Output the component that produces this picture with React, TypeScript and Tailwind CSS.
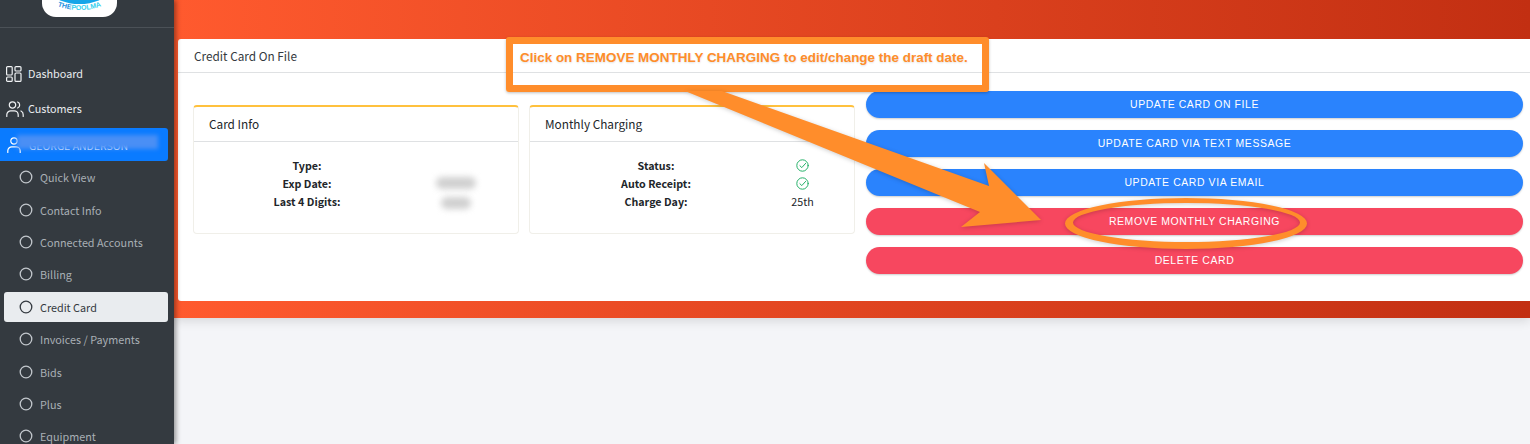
import type { ReactNode } from "react";

const font = { fontFamily: '"Noto Sans CJK JP", "Noto Sans", sans-serif' };
const arial = { fontFamily: '"Liberation Sans", Arial, sans-serif' };

function CircleIcon({ dark }: { dark?: boolean }) {
  return (
    <svg width="14" height="14" viewBox="0 0 14 14" fill="none" stroke={dark ? "#343a40" : "#c2c7cc"} strokeWidth="1.3">
      <circle cx="7" cy="7" r="5.8" />
    </svg>
  );
}

function DashboardIcon() {
  return (
    <svg width="16" height="16" viewBox="0 0 16 16" fill="none" stroke="#f1f3f5" strokeWidth="1.2">
      <rect x="0.6" y="0.6" width="5.6" height="8.4" rx="1" />
      <rect x="9" y="0.6" width="6" height="4.4" rx="1" />
      <rect x="0.6" y="11" width="5.6" height="4.4" rx="1" />
      <rect x="9" y="7" width="6" height="8.4" rx="1" />
    </svg>
  );
}

function UsersIcon() {
  return (
    <svg width="18" height="16" viewBox="0 0 18 16" fill="none" stroke="#f1f3f5" strokeWidth="1.2" strokeLinecap="round">
      <circle cx="6.5" cy="4" r="3.2" />
      <path d="M0.8 15.4v-1.6a4 4 0 0 1 4-4h3.4a4 4 0 0 1 4 4v1.6" />
      <path d="M11.6 1a3.2 3.2 0 0 1 0 6" />
      <path d="M15 10a4 4 0 0 1 2.2 3.8v1.6" />
    </svg>
  );
}

function UserIcon() {
  return (
    <svg width="14" height="16" viewBox="0 0 14 16" fill="none" stroke="#ffffff" strokeWidth="1.2" strokeLinecap="round">
      <circle cx="7" cy="4" r="3.2" />
      <path d="M0.8 15.4v-1.6a4 4 0 0 1 4-4h4.4a4 4 0 0 1 4 4v1.6" />
    </svg>
  );
}

function CheckIcon() {
  return (
    <svg width="13" height="13" viewBox="0 0 13 13" fill="none" stroke="#24b168" strokeWidth="1" strokeLinecap="round" strokeLinejoin="round" className="mx-auto mt-[2px]">
      <circle cx="6.5" cy="6.5" r="5.7" />
      <path d="M3.9 6.7 5.8 8.6 9.6 4.4" />
    </svg>
  );
}

function Logo() {
  return (
    <svg width="75" height="17" viewBox="0 0 75 17">
      <path d="M0 -10H75V3a14 14 0 0 1-14 14H14A14 14 0 0 1 0 3Z" fill="#ffffff" />
      <ellipse cx="37.5" cy="-7" rx="26" ry="11" fill="#16a5e8" />
      <path id="logo-arc" d="M10 4Q37.5 16 65 4" fill="none" />
      <text fontSize="7" fontWeight="700" fontFamily='"Liberation Sans", Arial, sans-serif' fill="#1b8fe0">
        <textPath href="#logo-arc" startOffset="50%" textAnchor="middle">
          THE<tspan fill="#35d0ee">POOLMA</tspan>
        </textPath>
      </text>
    </svg>
  );
}

const subItems = ["Quick View", "Contact Info", "Connected Accounts", "Billing", "Credit Card", "Invoices / Payments", "Bids", "Plus", "Equipment"];

function Sidebar() {
  return (
    <aside className="relative z-10 w-[174px] shrink-0 h-full bg-[#343a40] overflow-hidden shadow-[2px_0_5px_rgba(0,0,0,0.4)]">
      <div className="h-[28px] pl-[42px] border-b border-[#4b5157] flex">
        <Logo />
      </div>

      <nav className="pt-[28px] text-[10.8px] leading-[12px]">
        <div className="h-[35px] flex items-center pl-[6px] text-[#e9ecef]">
          <DashboardIcon />
          <span className="ml-[6px] -mt-[2px]">Dashboard</span>
        </div>
        <div className="h-[35px] flex items-center pl-[6px] text-[#e9ecef]">
          <UsersIcon />
          <span className="ml-[4px] -mt-[2px]">Customers</span>
        </div>
        <div className="relative w-[168px] h-[33px] mt-[2px] flex items-center pl-[7px] bg-[#0a7bff] rounded-r-[3px] text-white overflow-hidden">
          <UserIcon />
          <span className="ml-[8px] mt-[3px] text-[10.5px] whitespace-nowrap">GEORGE ANDERSON</span>
          <div className="absolute left-[17px] top-[7px] w-[141px] h-[14px] bg-[#4a8ff5] blur-[2px]" />
        </div>
        <div>
          {subItems.map((item) => (
            <div key={item} className="h-[32.4px] flex items-center">
              <div
                className={`h-[30px] flex items-center ${
                  item === "Credit Card"
                    ? "ml-[4px] w-[164px] pl-[15px] rounded-[3px] bg-[#e9ecef] text-[#343a40]"
                    : "ml-[19px] text-[#a9afb5]"
                }`}
              >
                <CircleIcon dark={item === "Credit Card"} />
                <span className="ml-[7px] whitespace-nowrap">{item}</span>
              </div>
            </div>
          ))}
        </div>
      </nav>
    </aside>
  );
}

function InfoCard({ title, labelWidth, valueWidth, rows }: { title: string; labelWidth: number; valueWidth: number; rows: [string, ReactNode][] }) {
  return (
    <div className="w-[326px] h-[129px] bg-white rounded-[4px] border border-[#f0efe9] border-t-2 border-t-[#ffc13d]">
      <div className="h-[35px] flex items-center pl-[15px] border-b border-[#dfe1e3] text-[11.8px] text-[#212529]">{title}</div>
      <div className="pt-[15px] text-[10.7px] leading-[18px] text-[#212529]">
        {rows.map(([label, value]) => (
          <div key={label} className="flex h-[18px]">
            <div className="text-center font-bold" style={{ width: labelWidth }}>{label}</div>
            <div className="text-center" style={{ width: valueWidth }}>{value}</div>
          </div>
        ))}
      </div>
    </div>
  );
}

const buttons = [
  { label: "UPDATE CARD ON FILE", color: "bg-[#2a83fd]" },
  { label: "UPDATE CARD VIA TEXT MESSAGE", color: "bg-[#2a83fd]" },
  { label: "UPDATE CARD VIA EMAIL", color: "bg-[#2a83fd]" },
  { label: "REMOVE MONTHLY CHARGING", color: "bg-[#f7475f]" },
  { label: "DELETE CARD", color: "bg-[#f7475f]" },
];

function Annotation() {
  return (
    <>
      <div className="absolute z-20 left-[506px] top-[37px] w-[483px] h-[55px] border-[7px] border-[#ff8d2b] rounded-[3px] shadow-[0_1px_3px_rgba(0,0,0,0.25)]">
        <span
          className="absolute left-[7px] top-[4px] text-[13.46px] leading-[20px] font-bold text-[#ff8d2b] whitespace-nowrap [text-shadow:0_1px_2px_rgba(0,0,0,0.12)]"
          style={arial}
        >
          Click on REMOVE MONTHLY CHARGING to edit/change the draft date.
        </span>
      </div>
      <svg className="absolute z-20 left-0 top-0 pointer-events-none drop-shadow-[0_1px_2px_rgba(0,0,0,0.2)]" width="1530" height="444" viewBox="0 0 1530 444">
        <polygon points="685,91 722,91 989,186 984,163 1041,220 961,227 980,212" fill="#ff8d2b" />
        <path
          fillRule="evenodd"
          fill="#ff8d2b"
          d="M1065 223.5a121 25.5 0 1 0 242 0a121 25.5 0 1 0-242 0ZM1073 222.5a113.5 19.5 0 1 0 227 0a113.5 19.5 0 1 0-227 0Z"
        />
      </svg>
    </>
  );
}

export default function App() {
  return (
    <div className="relative flex w-[1530px] h-[444px] overflow-hidden bg-[#f4f5f8]" style={font}>
      <Sidebar />
      <main className="flex-1 min-w-0">
        <div className="h-[318px] pt-[39px] pl-[4px] bg-linear-to-r/srgb from-[#ff5a2e] to-[#c22f12] shadow-[0_3px_10px_rgba(0,0,0,0.12)]">
          <div className="h-[262px] bg-white rounded-l-[3px]">
            <div className="h-[34px] flex items-center pl-[16px] border-b border-[#dfe1e3] text-[11.8px] text-[#343a40]">Credit Card On File</div>
            <div className="flex pt-[32px] pl-[15px] pr-[7px]">
              <div className="flex gap-[10px]">
                <InfoCard
                  title="Card Info"
                  labelWidth={226}
                  valueWidth={72}
                  rows={[
                    ["Type:", null],
                    ["Exp Date:", <div className="mx-auto mt-[2px] w-[40px] h-[12px] rounded-full bg-[#d0d0d0] blur-[3px]" />],
                    ["Last 4 Digits:", <div className="mx-auto mt-[4px] w-[30px] h-[12px] rounded-full bg-[#d0d0d0] blur-[3px]" />],
                  ]}
                />
                <InfoCard
                  title="Monthly Charging"
                  labelWidth={252}
                  valueWidth={41}
                  rows={[
                    ["Status:", <CheckIcon />],
                    ["Auto Receipt:", <CheckIcon />],
                    ["Charge Day:", "25th"],
                  ]}
                />
              </div>
              <div className="flex-1 ml-[11px] -mt-[14px] flex flex-col gap-[12px]">
                {buttons.map((b) => (
                  <div
                    key={b.label}
                    className={`h-[27px] rounded-full flex items-center justify-center text-[10.45px] tracking-[0.6px] text-white shadow-[0_1px_2px_rgba(0,0,0,0.2)] ${b.color}`}
                    style={arial}
                  >
                    {b.label}
                  </div>
                ))}
              </div>
            </div>
          </div>
        </div>
      </main>
      <Annotation />
    </div>
  );
}
